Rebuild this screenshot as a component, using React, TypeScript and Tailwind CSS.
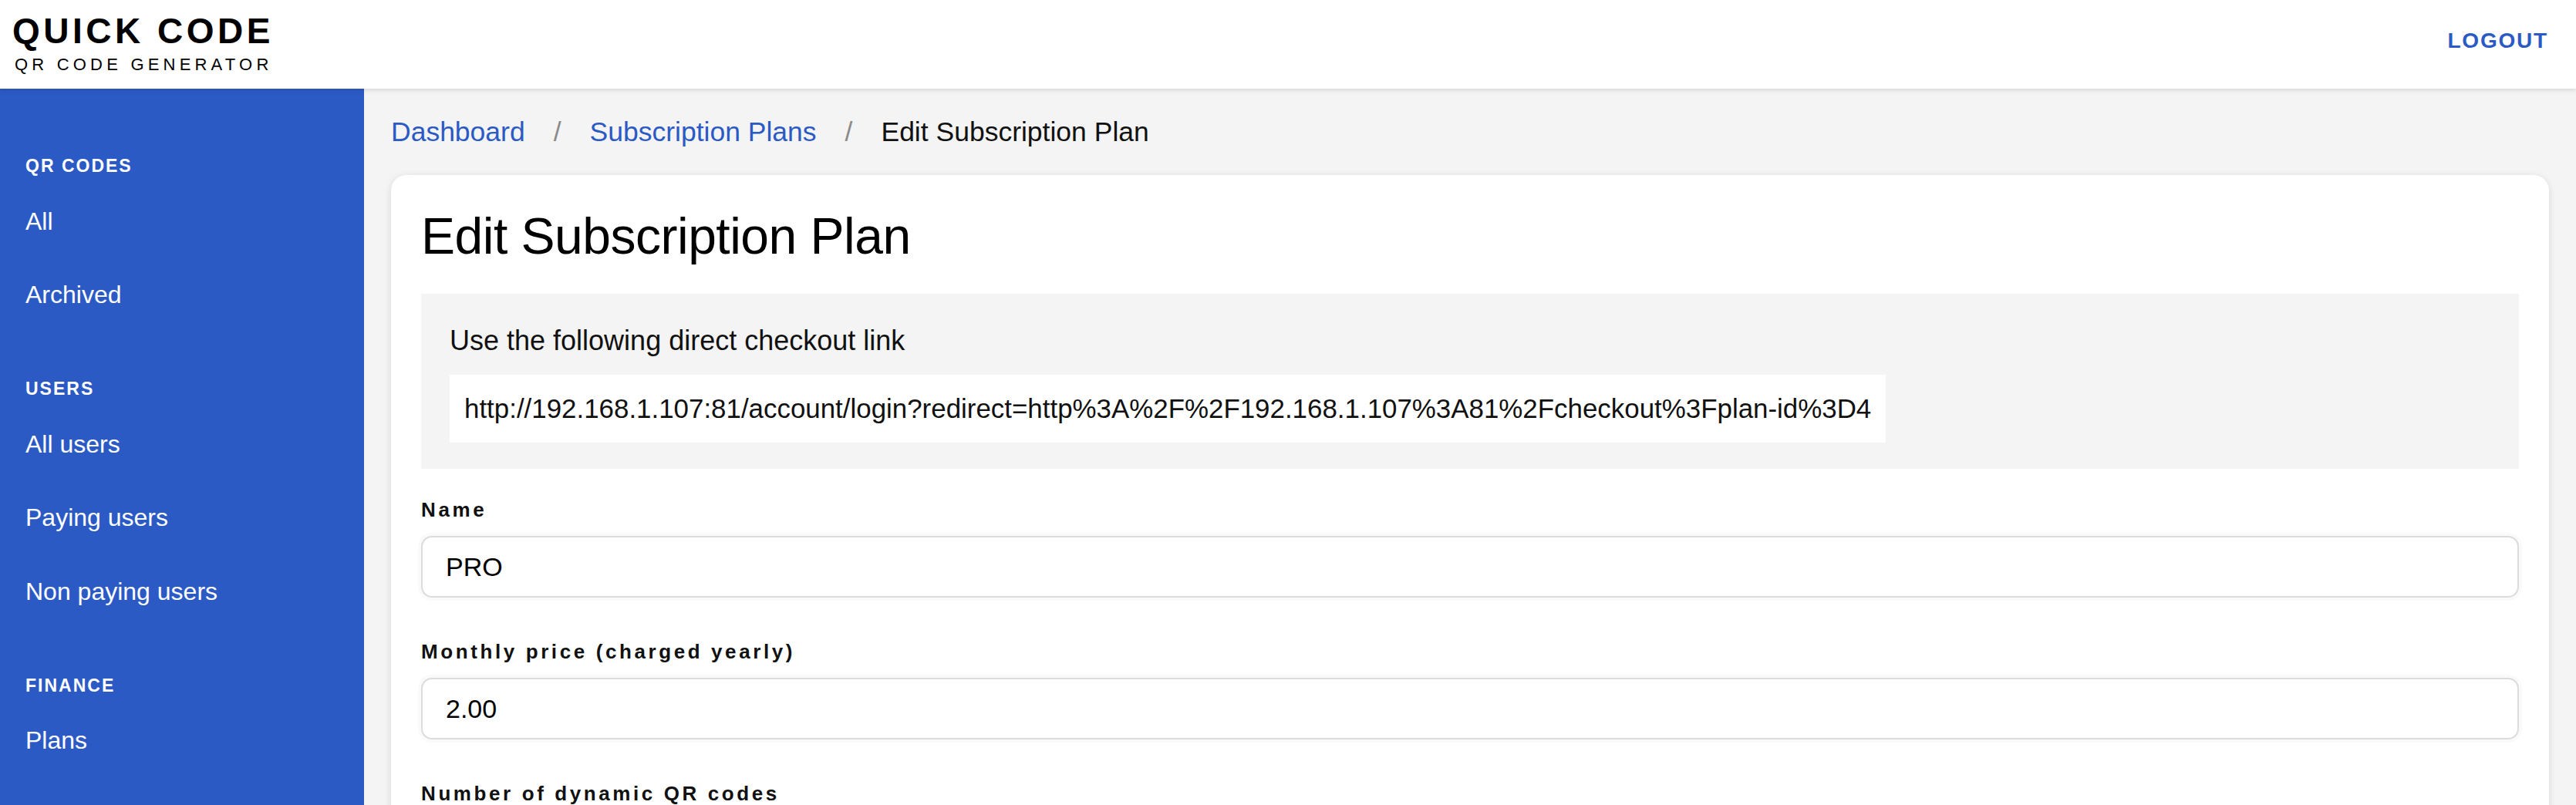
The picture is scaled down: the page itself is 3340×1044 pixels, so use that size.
import { ReactNode } from "react";

type NavSection = { title: string; items: string[] };

const sections: NavSection[] = [
  { title: "QR CODES", items: ["All", "Archived"] },
  { title: "USERS", items: ["All users", "Paying users", "Non paying users"] },
  { title: "FINANCE", items: ["Plans"] },
];

const checkoutUrl =
  "http://192.168.1.107:81/account/login?redirect=http%3A%2F%2F192.168.1.107%3A81%2Fcheckout%3Fplan-id%3D4";

function Field({ label, value, children }: { label: string; value?: string; children?: ReactNode }) {
  return (
    <div className="mb-[51px]">
      <label className="block text-[26px] leading-[39px] font-bold tracking-[3.6px] text-[#111] mb-[14px]">
        {label}
      </label>
      {children ?? (
        <input
          readOnly
          value={value}
          className="block w-full h-[80px] rounded-[14px] border-2 border-[#dcdcdc] bg-white pl-[30px] text-[34px] text-black outline-none shadow-[0_0_0_4px_#fafafa]"
        />
      )}
    </div>
  );
}

export default function App() {
  return (
    <div className="flex flex-col h-[1044px] overflow-hidden bg-[#f4f4f4] font-['Liberation_Sans',Arial,sans-serif] text-[#111]">
      {/* top bar */}
      <header className="relative z-10 h-[115px] shrink-0 bg-white shadow-[0_2px_6px_rgba(0,0,0,0.12)] flex justify-between">
        <div className="pl-[16px] pt-[17px] flex flex-col">
          <span className="text-[46px] leading-[46px] font-bold tracking-[4.5px] text-black">QUICK CODE</span>
          <span className="mt-[10px] pl-[3px] text-[22px] leading-[22px] tracking-[5.2px] text-black">QR CODE GENERATOR</span>
        </div>
        <a className="mr-[36px] mt-[39px] text-[28px] leading-[28px] font-bold tracking-[1.8px] text-[#2c5ac5]">
          LOGOUT
        </a>
      </header>

      <div className="flex flex-1 min-h-0">
        {/* sidebar */}
        <nav className="w-[472px] shrink-0 bg-[#2c5ac5] pt-[89px] pl-[33px] text-white">
          {sections.map((s) => (
            <div key={s.title} className="mb-[63px]">
              <div className="text-[23px] leading-[23px] font-bold tracking-[2px] mb-[12px]">{s.title}</div>
              {s.items.map((item) => (
                <a key={item} className="block py-[31.75px] text-[32px] leading-[32px]">
                  {item}
                </a>
              ))}
            </div>
          ))}
        </nav>

        {/* main */}
        <main className="flex-1 min-w-0 px-[35px] pt-[31px]">
          <div className="flex items-center text-[35.5px] leading-[51px] mb-[30px]">
            <a className="text-[#2c5ac5]">Dashboard</a>
            <span className="mx-[37px] text-[#8a8a8a]">/</span>
            <a className="text-[#2c5ac5]">Subscription Plans</a>
            <span className="mx-[37px] text-[#8a8a8a]">/</span>
            <span className="text-[#111]">Edit Subscription Plan</span>
          </div>

          <div className="bg-white rounded-[20px] shadow-[0_2px_10px_rgba(0,0,0,0.12)] px-[39px] pt-[40px] pb-[40px]">
            <h1 className="text-[66px] leading-[79px] font-normal tracking-[-0.5px] text-black mb-[35px]">
              Edit Subscription Plan
            </h1>

            <div className="bg-[#f4f4f4] px-[37px] pt-[34px] pb-[34px] mb-[34px]">
              <p className="text-[36px] leading-[54px]">Use the following direct checkout link</p>
              <div className="mt-[17px] inline-block bg-white px-[19px] py-[17px] text-[34.9px] leading-[54px]">
                {checkoutUrl}
              </div>
            </div>

            <Field label="Name" value="PRO" />
            <Field label="Monthly price (charged yearly)" value="2.00" />
            <Field label="Number of dynamic QR codes" value="100" />
          </div>
        </main>
      </div>
    </div>
  );
}
